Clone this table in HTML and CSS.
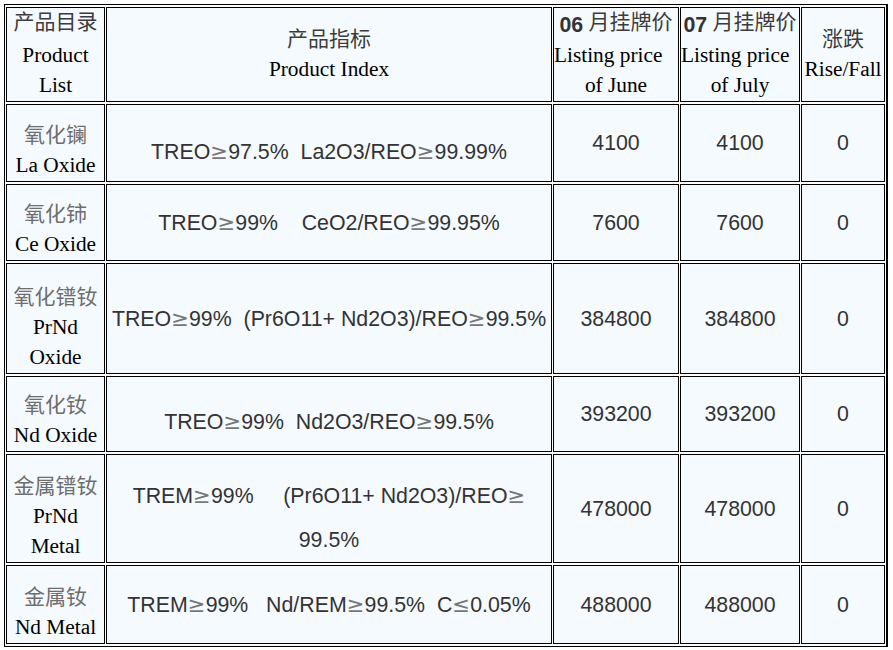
FILE: index.html
```html
<!DOCTYPE html>
<html lang="zh">
<head>
<meta charset="utf-8">
<title>产品价格</title>
<link rel="stylesheet" href="styles.css">
</head>
<body>
<table class="price">
  <colgroup>
    <col class="c1"><col class="c2"><col class="c3"><col class="c4"><col class="c5">
  </colgroup>
  <tr class="r1">
    <td><span class="zh hd up">产品目录</span><br><span class="en">Product<br>List</span></td>
    <td class="hb"><span class="zh hd">产品指标</span><br><span class="en">Product Index</span></td>
    <td class="mon"><b class="num">06</b> <span class="zh hd up">月挂牌价</span><div class="lp">Listing price</div><span class="en">of June</span></td>
    <td class="mon"><b class="num">07</b> <span class="zh hd up">月挂牌价</span><div class="lp">Listing price</div><span class="en">of July</span></td>
    <td class="hb"><span class="zh hd">涨跌</span><br><span class="en">Rise/Fall</span></td>
  </tr>
  <tr class="r2">
    <td class="name"><span class="zh">氧化镧</span><br><span class="en">La Oxide</span></td>
    <td class="spec low">TREO<span class="ge">≥</span>97.5%&nbsp;&nbsp;La2O3/REO<span class="ge">≥</span>99.99%</td>
    <td class="num">4100</td><td class="num">4100</td><td class="num">0</td>
  </tr>
  <tr class="r3">
    <td class="name"><span class="zh">氧化铈</span><br><span class="en">Ce Oxide</span></td>
    <td class="spec">TREO<span class="ge">≥</span>99%&nbsp;&nbsp;&nbsp;&nbsp;CeO2/REO<span class="ge">≥</span>99.95%</td>
    <td class="num">7600</td><td class="num">7600</td><td class="num">0</td>
  </tr>
  <tr class="r4">
    <td class="name"><span class="zh">氧化镨钕</span><br><span class="en">PrNd<br>Oxide</span></td>
    <td class="spec">TREO<span class="ge">≥</span>99%&nbsp;&nbsp;(Pr6O11+ Nd2O3)/REO<span class="ge">≥</span>99.5%</td>
    <td class="num">384800</td><td class="num">384800</td><td class="num">0</td>
  </tr>
  <tr class="r5">
    <td class="name"><span class="zh">氧化钕</span><br><span class="en">Nd Oxide</span></td>
    <td class="spec low">TREO<span class="ge">≥</span>99%&nbsp;&nbsp;Nd2O3/REO<span class="ge">≥</span>99.5%</td>
    <td class="num">393200</td><td class="num">393200</td><td class="num">0</td>
  </tr>
  <tr class="r6">
    <td class="name"><span class="zh">金属镨钕</span><br><span class="en">PrNd<br>Metal</span></td>
    <td class="spec tall">TREM<span class="ge">≥</span>99%&nbsp;&nbsp;&nbsp;&nbsp;&nbsp;(Pr6O11+ Nd2O3)/REO<span class="ge">≥</span><br>99.5%</td>
    <td class="num">478000</td><td class="num">478000</td><td class="num">0</td>
  </tr>
  <tr class="r7">
    <td class="name"><span class="zh">金属钕</span><br><span class="en">Nd Metal</span></td>
    <td class="spec">TREM<span class="ge">≥</span>99%&nbsp;&nbsp;&nbsp;Nd/REM<span class="ge">≥</span>99.5%&nbsp;&nbsp;C<span class="ge">≤</span>0.05%</td>
    <td class="num">488000</td><td class="num">488000</td><td class="num">0</td>
  </tr>
</table>
</body>
</html>
```
FILE: styles.css
```css
html, body {
  margin: 0;
  background: #ffffff;
}
body {
  padding: 4px 0 0 4px;
  font-family: "Liberation Serif", "Noto Sans CJK SC", serif;
  font-size: 21.33px;
  color: #000;
}
.price {
  box-sizing: border-box;
  width: 883px;
  table-layout: fixed;
  border: 1px solid #000;
  border-right-width: 2px;
  border-collapse: separate;
  border-spacing: 1px 2px;
  background: #fff;
}
.c1 { width: 99px; }
.c2 { width: 446px; }
.c3 { width: 126px; }
.c4 { width: 120px; }
.c5 { width: 84px; }
.price td {
  box-sizing: border-box;
  border: 1px solid #000;
  background: #f5faff;
  padding: 0;
  text-align: center;
  vertical-align: middle;
  line-height: 30px;
  white-space: nowrap;
}
.r1 { height: 95px; }
.r2 { height: 78px; }
.r3 { height: 77px; }
.r4 { height: 111px; }
.r5 { height: 76px; }
.r6 { height: 109px; }
.r7 { height: 79px; }
.zh {
  font-family: "Noto Sans CJK SC", sans-serif;
  color: #6e6e6e;
  font-size: 21px;
  line-height: 30px;
}
.zh.hd { color: #3c3c3c; }
.zh.up {
  line-height: 22px;
  vertical-align: 3px;
}
.price td.hb { padding-bottom: 4px; }
.en {
  font-family: "Liberation Serif", serif;
  color: #000;
}
.price td.num, .price b.num {
  font-family: "Liberation Sans", Arial, sans-serif;
  color: #333;
}
.price b.num { font-weight: bold; }
.mon .lp {
  text-align: left;
  font-family: "Liberation Serif", serif;
}
.price td.name {
  vertical-align: bottom;
  padding-bottom: 1px;
}
.price td.spec {
  font-family: "Liberation Sans", Arial, sans-serif;
  color: #333;
}
.price td.low {
  vertical-align: bottom;
  padding-bottom: 14px;
}
.price td.tall {
  line-height: 44px;
  vertical-align: bottom;
}
.ge {
  font-family: "DejaVu Sans", sans-serif;
  color: #777;
}
```
